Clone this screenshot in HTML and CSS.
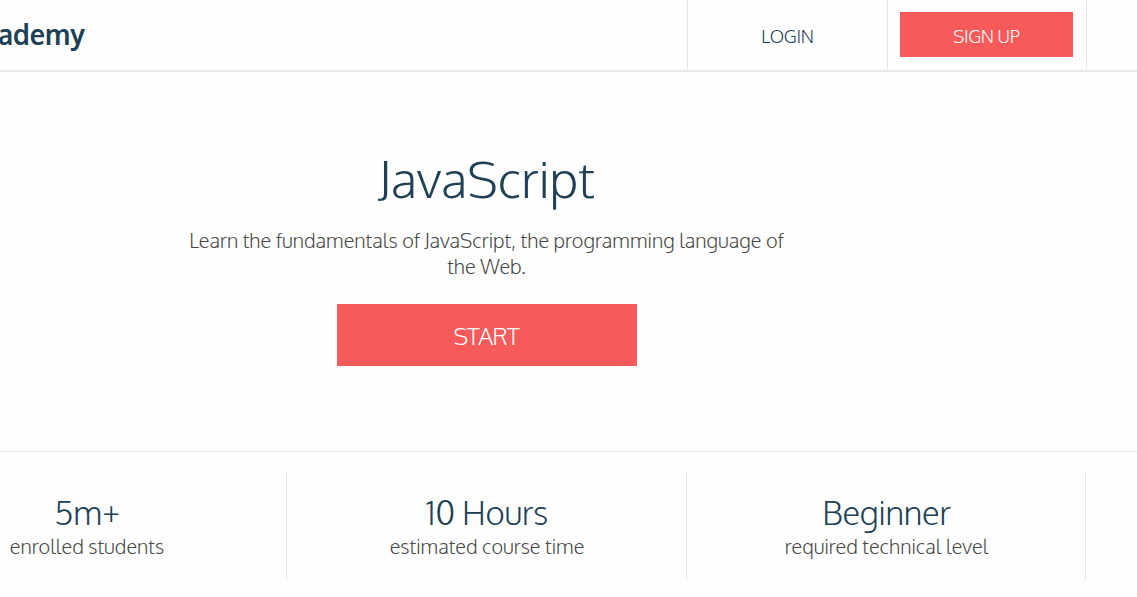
FILE: index.html
```html
<!DOCTYPE html>
<html lang="en">
<head>
  <meta charset="UTF-8">
  <meta name="viewport" content="width=device-width, initial-scale=1.0">
  <title>JavaScript</title>
  <link rel="stylesheet" href="styles.css">
</head>
<body>

  <header class="header">
    <div class="container header-inner">
      <a class="logo">ademy</a>
      <nav class="nav">
        <div class="nav-item"><a class="login">LOGIN</a></div>
        <div class="nav-item"><a class="signup">SIGN UP</a></div>
      </nav>
    </div>
  </header>

  <section class="hero">
    <div class="container hero-inner">
      <h1 class="title">JavaScript</h1>
      <p class="intro">Learn the fundamentals of JavaScript, the programming language of<br>the Web.</p>
      <a class="start">START</a>
    </div>
  </section>

  <section class="stats">
    <div class="container stats-inner">
      <div class="stat">
        <h2 class="stat-value">5m+</h2>
        <p class="stat-label">enrolled students</p>
      </div>
      <div class="stat">
        <h2 class="stat-value">10 Hours</h2>
        <p class="stat-label">estimated course time</p>
      </div>
      <div class="stat">
        <h2 class="stat-value">Beginner</h2>
        <p class="stat-label">required technical level</p>
      </div>
    </div>
  </section>

</body>
</html>
```

FILE: styles.css
```css
* {
  box-sizing: border-box;
}
body {
  margin: 0;
  height: 597px;
  overflow: hidden;
  background-color: #fefefe;
  color: #484848;
  font-family: "Oxygen", "Open Sans", "Noto Sans", sans-serif;
  font-weight: 300;
}
h1, h2, p {
  margin: 0;
  font-weight: 300;
}
.container {
  width: 1200px;
  margin-left: -113px;
}
.header {
  height: 72px;
  border-bottom: 2px solid #e8e8e8;
}
.header-inner {
  display: flex;
  justify-content: space-between;
  padding-left: 111px;
}
.logo {
  padding-top: 13px;
  color: #204056;
  font-size: 29px;
  font-weight: 700;
  line-height: 42px;
  transform: scaleX(0.935);
  transform-origin: left;
}
.nav {
  display: flex;
}
.nav-item {
  display: flex;
  width: 200px;
  height: 69px;
  border-left: 1px solid #e6e6e6;
  font-size: 18px;
  letter-spacing: -0.25px;
}
.nav-item:last-child {
  border-right: 1px solid #e6e6e6;
}
.login {
  flex: 1;
  color: #204056;
  line-height: 73px;
  text-align: center;
}
.signup {
  width: 173px;
  height: 45px;
  margin: 12px 0 0 12px;
  background-color: #f65a5b;
  color: #fff;
  line-height: 49px;
  text-align: center;
}
.hero {
  height: 380px;
  border-bottom: 1px solid #e6e6e6;
}
.hero-inner {
  display: flex;
  flex-direction: column;
  align-items: center;
  padding-top: 71px;
  text-align: center;
}
.title {
  padding-right: 1px;
  color: #204056;
  font-size: 50px;
  line-height: 72px;
}
.intro {
  margin-top: 12px;
  padding-right: 1px;
  font-size: 20px;
  line-height: 26px;
  white-space: nowrap;
}
.start {
  width: 300px;
  height: 62px;
  margin-top: 25px;
  padding-right: 2px;
  background-color: #f65a5b;
  color: #fff;
  font-size: 24px;
  letter-spacing: -1px;
  line-height: 64px;
}
.stats-inner {
  display: flex;
  padding-top: 20px;
}
.stat {
  width: 400px;
  height: 108px;
  padding: 17px 0 0 1px;
  border-right: 1px solid #e6e6e6;
  text-align: center;
}
.stat:last-child {
  width: 399px;
}
.stat-value {
  color: #204056;
  font-size: 33px;
  letter-spacing: -0.25px;
  line-height: 46px;
}
.stat-label {
  margin-top: -1px;
  font-size: 20px;
  line-height: 24px;
}
```
